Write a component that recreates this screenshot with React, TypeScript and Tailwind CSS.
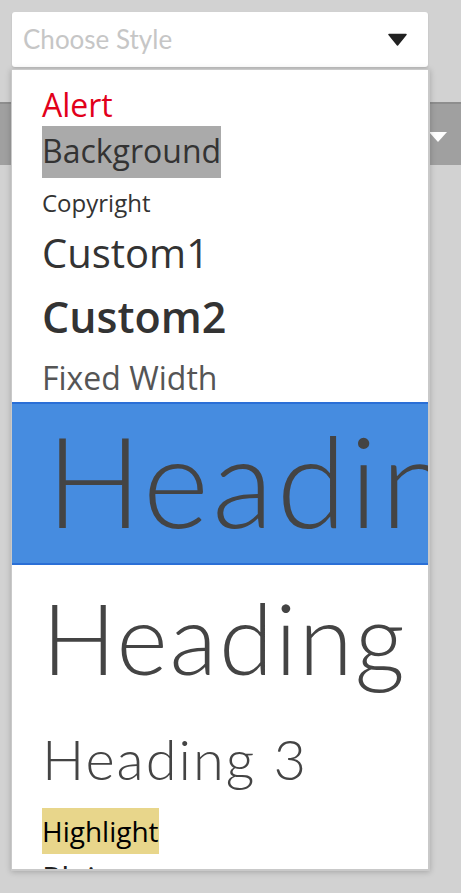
import React from "react";

const openSans = "font-['Open_Sans','Noto_Sans',sans-serif]";
const lato = "font-['Lato','Noto_Sans',sans-serif]";

const StyleMenu: React.FC = () => {
  return (
    <div
      className={`absolute left-[11px] top-[69px] w-[419px] h-[802px] overflow-hidden bg-white border border-[#c9c9c9] border-r-2 border-b-2 shadow-[0_1px_6px_rgba(0,0,0,0.22)] ${openSans}`}
    >
      <div className="pt-[13px]">
        <div className="pl-[30px] h-[43px] leading-[43px] text-[32px] text-[#e2001a] whitespace-nowrap">
          Alert
        </div>
        <div className="pl-[30px] h-[52px]">
          <span className="inline-block h-[52px] leading-[49px] text-[32px] text-[#333] bg-[#aaaaaa] whitespace-nowrap">
            Background
          </span>
        </div>
        <div className="pl-[30px] h-[49px] leading-[49px] text-[24px] text-[#333] whitespace-nowrap">
          Copyright
        </div>
        <div className="pl-[30px] h-[49px] leading-[51px] text-[40px] text-[#333] whitespace-nowrap">
          Custom1
        </div>
        <div className="pl-[30px] h-[79px] leading-[81px] text-[43px] font-semibold text-[#333] whitespace-nowrap">
          Custom2
        </div>
        <div className="pl-[30px] h-[47px] leading-[46px] text-[32px] text-[#555] whitespace-nowrap">
          Fixed Width
        </div>
        <div className="h-[163px] border-y-2 border-[#2a6fd6] bg-[#468ce0] pl-[34px] overflow-hidden">
          <div className={`h-[150px] leading-[150px] text-[127px] font-light tracking-[3px] text-[#444] whitespace-nowrap ${lato}`}>
            Heading 1
          </div>
        </div>
        <div className={`pl-[30px] h-[144px] leading-[144px] text-[98px] font-light tracking-[2px] text-[#444] whitespace-nowrap ${lato}`}>
          Heading 2
        </div>
        <div className={`pl-[30px] h-[99px] leading-[99px] text-[56px] font-light tracking-[2px] text-[#444] whitespace-nowrap ${lato}`}>
          Heading 3
        </div>
        <div className="pl-[30px] h-[46px]">
          <span className="inline-block h-[46px] leading-[46px] text-[28px] text-black bg-[#e8d68b] whitespace-nowrap">
            Highlight
          </span>
        </div>
        <div className="pl-[30px] h-[50px] leading-[50px] text-[32px] text-[#222] whitespace-nowrap">
          Plain text
        </div>
      </div>
    </div>
  );
};

export default function App() {
  return (
    <div className="relative w-full h-[893px] overflow-hidden bg-[#d2d2d2]">
      <div className="pl-3 pt-3">
        <div className="flex items-center w-[416px] h-[55px] rounded-[3px] bg-white shadow-[0_1px_2px_rgba(0,0,0,0.12)] pl-[11px] pr-[21px]">
          <span className={`text-[26px] leading-none -mt-[1px] text-[#c6c6c6] ${lato}`}>Choose Style</span>
          <svg className="ml-auto" width="19" height="13" viewBox="0 0 19 13">
            <path d="M1 1.5 L18 1.5 L9.5 12 Z" fill="#222" stroke="#222" strokeWidth="1.5" strokeLinejoin="round" />
          </svg>
        </div>
      </div>
      <div className="mt-[35px] h-[63px] border-t-2 border-[#8e8e8e] bg-[#a0a0a0] flex items-center">
        <svg className="ml-auto mr-[14px] mt-[4px]" width="18" height="10" viewBox="0 0 18 10">
          <path d="M0 0 L18 0 L9 10 Z" fill="#fff" />
        </svg>
      </div>
      <StyleMenu />
    </div>
  );
}
